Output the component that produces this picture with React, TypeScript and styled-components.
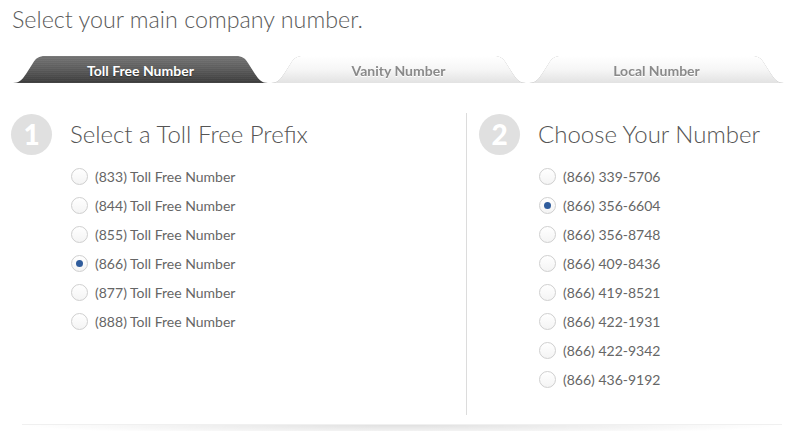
import React, { useState } from "react";
import styled, { createGlobalStyle } from "styled-components";

const GlobalStyle = createGlobalStyle`
  html, body {
    margin: 0;
    padding: 0;
    background: #fff;
    font-family: Lato, "Open Sans", Arial, sans-serif;
  }
`;

const TAB_PATH =
  "path('M0 27 C6 27 9 24 13 18 L20 7 C23 2 26 0 32 0 L223 0 C229 0 232 2 235 7 L242 18 C246 24 249 27 255 27 Z')";

const Page = styled.div`
  width: 803px;
  height: 431px;
  overflow: hidden;
`;

const Title = styled.h1`
  margin: 0;
  padding: 5px 0 0 12px;
  height: 56px;
  box-sizing: border-box;
  font-size: 23.3px;
  font-weight: 300;
  color: #5a5a5a;
`;

const TabBar = styled.div`
  display: flex;
  gap: 3px;
  padding-left: 13px;
  height: 28px;
`;

const TabShadow = styled.div<{ active: boolean }>`
  filter: ${({ active }) =>
    active ? "none" : "drop-shadow(0 0 0.6px rgba(0, 0, 0, 0.35))"};
`;

const Tab = styled.button<{ active: boolean }>`
  display: flex;
  align-items: center;
  justify-content: center;
  width: 255px;
  height: 27px;
  border: 0;
  padding: 1px 0 0;
  cursor: pointer;
  clip-path: ${TAB_PATH};
  font-family: Lato, Arial, sans-serif;
  font-size: 14px;
  font-weight: 700;
  color: ${({ active }) => (active ? "#fff" : "#8a8a8a")};
  background: ${({ active }) =>
    active
      ? "repeating-linear-gradient(180deg, rgba(255,255,255,0.03) 0 1px, rgba(0,0,0,0.02) 1px 2px), linear-gradient(180deg, #757575 0%, #5c5c5c 50%, #3c3c3c 100%)"
      : "linear-gradient(180deg, #ffffff 0%, #f6f6f6 50%, #e2e2e2 100%)"};
  text-shadow: ${({ active }) =>
    active ? "0 1px 1px rgba(0,0,0,0.4)" : "0 1px 0 #fff"};
`;

const Body = styled.div`
  display: flex;
  margin: 29px 0 0 0;
  height: 302px;
`;

const Column = styled.div<{ divided?: boolean }>`
  display: flex;
  flex-direction: column;
  box-sizing: border-box;
  width: ${({ divided }) => (divided ? "337px" : "466px")};
  padding-left: ${({ divided }) => (divided ? "12px" : "11px")};
  border-left: ${({ divided }) => (divided ? "1px solid #dcdcdc" : "0")};
`;

const StepHead = styled.div`
  display: flex;
  align-items: center;
  gap: 18px;
  height: 42px;
`;

const StepBadge = styled.div`
  width: 41px;
  height: 41px;
  border-radius: 50%;
  background: #e0e0e0;
  color: #fff;
  display: flex;
  align-items: center;
  justify-content: center;
  font-size: 28px;
  font-weight: 900;
  flex-shrink: 0;
`;

const StepTitle = styled.h2`
  margin: 0;
  font-size: 24px;
  font-weight: 300;
  color: #555;
  padding-bottom: 2px;
`;

const Options = styled.div`
  display: flex;
  flex-direction: column;
  padding: 7px 0 0 60px;
`;

const Option = styled.label`
  display: flex;
  align-items: center;
  gap: 7px;
  height: 29px;
  font-size: 14px;
  color: #666;
  cursor: pointer;
`;

const Radio = styled.input.attrs({ type: "radio" })`
  appearance: none;
  margin: 0;
  width: 17px;
  height: 17px;
  border-radius: 50%;
  border: 1px solid #cfcfcf;
  background: linear-gradient(180deg, #ffffff, #f4f4f4);
  box-sizing: border-box;
  display: flex;
  align-items: center;
  justify-content: center;
  cursor: pointer;
  &:checked::after {
    content: "";
    width: 7px;
    height: 7px;
    border-radius: 50%;
    background: #2f5c9c;
  }
`;

const Footer = styled.div`
  margin: 9px auto 0;
  width: 760px;
  height: 10px;
  border-top: 1px solid #f0f0f0;
  background: radial-gradient(
    ellipse 50% 100% at 50% 0%,
    rgba(0, 0, 0, 0.12),
    rgba(0, 0, 0, 0) 100%
  );
`;

const tabs = ["Toll Free Number", "Vanity Number", "Local Number"];
const prefixes = ["833", "844", "855", "866", "877", "888"];
const numbers = [
  "(866) 339-5706",
  "(866) 356-6604",
  "(866) 356-8748",
  "(866) 409-8436",
  "(866) 419-8521",
  "(866) 422-1931",
  "(866) 422-9342",
  "(866) 436-9192",
];

const App = () => {
  const [tab, setTab] = useState(0);
  const [prefix, setPrefix] = useState("866");
  const [number, setNumber] = useState(numbers[1]);

  return (
    <Page>
      <GlobalStyle />
      <Title>Select your main company number.</Title>
      <TabBar>
        {tabs.map((t, i) => (
          <TabShadow key={t} active={i === tab}>
            <Tab active={i === tab} onClick={() => setTab(i)}>
              {t}
            </Tab>
          </TabShadow>
        ))}
      </TabBar>
      <Body>
        <Column>
          <StepHead>
            <StepBadge>1</StepBadge>
            <StepTitle>Select a Toll Free Prefix</StepTitle>
          </StepHead>
          <Options>
            {prefixes.map((p) => (
              <Option key={p}>
                <Radio
                  name="prefix"
                  checked={prefix === p}
                  onChange={() => setPrefix(p)}
                />
                ({p}) Toll Free Number
              </Option>
            ))}
          </Options>
        </Column>
        <Column divided>
          <StepHead>
            <StepBadge>2</StepBadge>
            <StepTitle>Choose Your Number</StepTitle>
          </StepHead>
          <Options>
            {numbers.map((n) => (
              <Option key={n}>
                <Radio
                  name="number"
                  checked={number === n}
                  onChange={() => setNumber(n)}
                />
                {n}
              </Option>
            ))}
          </Options>
        </Column>
      </Body>
      <Footer />
    </Page>
  );
};

export default App;
